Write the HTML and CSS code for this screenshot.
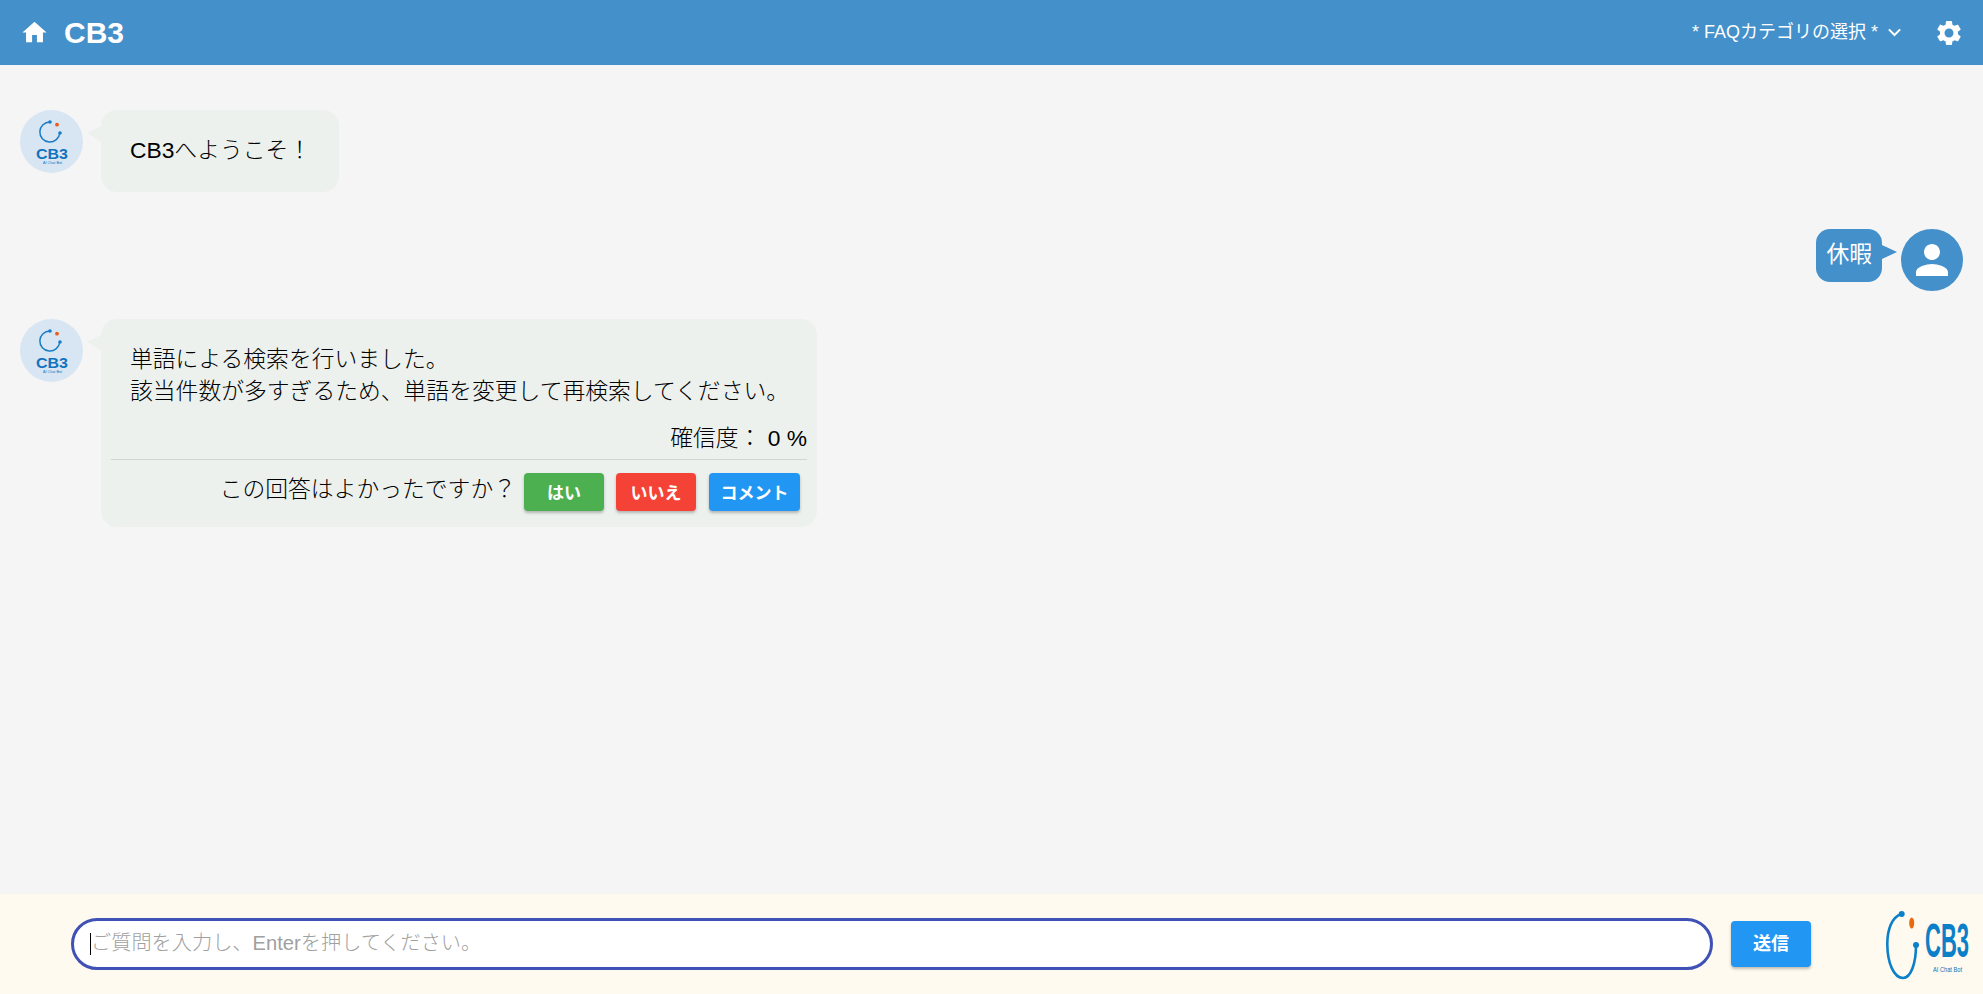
FILE: index.html
```html
<!DOCTYPE html>
<html lang="ja">
<head>
<meta charset="utf-8">
<title>CB3</title>
<link rel="stylesheet" href="styles.css">
</head>
<body>
<div class="app">
  <header class="topbar">
    <svg class="icon-home" viewBox="0 0 24 24"><path d="M10 20v-6h4v6h5v-8h3L12 3 2 12h3v8z"/></svg>
    <h1 class="brand">CB3</h1>
    <div class="spacer"></div>
    <div class="faq-select">
      <span class="faq-label">* FAQカテゴリの選択 *</span>
      <svg class="chevron" viewBox="0 0 12 8"><path d="M1 1.2l5 5 5-5"/></svg>
    </div>
    <svg class="icon-gear" viewBox="0 0 24 24"><path d="M19.14 12.94c.04-.3.06-.61.06-.94 0-.32-.02-.64-.07-.94l2.03-1.58c.18-.14.23-.41.12-.61l-1.92-3.32c-.12-.22-.37-.29-.59-.22l-2.39.96c-.5-.38-1.03-.7-1.62-.94l-.36-2.54c-.04-.24-.24-.41-.48-.41h-3.84c-.24 0-.43.17-.47.41l-.36 2.54c-.59.24-1.13.57-1.62.94l-2.39-.96c-.22-.08-.47 0-.59.22L2.74 8.87c-.12.21-.08.47.12.61l2.03 1.58c-.05.3-.09.63-.09.94s.02.64.07.94l-2.03 1.58c-.18.14-.23.41-.12.61l1.92 3.32c.12.22.37.29.59.22l2.39-.96c.5.38 1.03.7 1.62.94l.36 2.54c.05.24.24.41.48.41h3.84c.24 0 .44-.17.47-.41l.36-2.54c.59-.24 1.13-.56 1.62-.94l2.39.96c.22.08.47 0 .59-.22l1.92-3.32c.12-.22.07-.47-.12-.61l-2.01-1.58zM12 15.6c-1.98 0-3.6-1.62-3.6-3.6s1.62-3.6 3.6-3.6 3.6 1.62 3.6 3.6-1.62 3.6-3.6 3.6z"/></svg>
  </header>

  <main class="chat">
    <div class="row">
      <div class="avatar bot">
        <svg viewBox="0 0 63 63">
          <path class="mark" d="M30 12A10 10 0 1 0 39.800 23"/>
          <circle class="mark-dot" cx="30" cy="12" r="1.800"/>
          <circle class="mark-dot" cx="40" cy="23" r="1.800"/>
          <circle class="mark-orange" cx="37" cy="14.700" r="1.900"/>
          <text class="mark-name" x="16" y="49" textLength="32" lengthAdjust="spacingAndGlyphs">CB3</text>
          <text class="mark-sub" x="23" y="53.500" textLength="19" lengthAdjust="spacingAndGlyphs">AI Chat Bot</text>
        </svg>
      </div>
      <div class="bubble bot-bubble welcome">CB3へようこそ！</div>
    </div>

    <div class="row user-row">
      <div class="bubble user-bubble">休暇</div>
      <div class="avatar user">
        <svg viewBox="0 0 24 24"><path d="M12 12c2.21 0 4-1.79 4-4s-1.79-4-4-4-4 1.79-4 4 1.79 4 4 4zm0 2c-2.67 0-8 1.34-8 4v2h16v-2c0-2.66-5.33-4-8-4z"/></svg>
      </div>
    </div>

    <div class="row">
      <div class="avatar bot">
        <svg viewBox="0 0 63 63">
          <path class="mark" d="M30 12A10 10 0 1 0 39.800 23"/>
          <circle class="mark-dot" cx="30" cy="12" r="1.800"/>
          <circle class="mark-dot" cx="40" cy="23" r="1.800"/>
          <circle class="mark-orange" cx="37" cy="14.700" r="1.900"/>
          <text class="mark-name" x="16" y="49" textLength="32" lengthAdjust="spacingAndGlyphs">CB3</text>
          <text class="mark-sub" x="23" y="53.500" textLength="19" lengthAdjust="spacingAndGlyphs">AI Chat Bot</text>
        </svg>
      </div>
      <div class="bubble bot-bubble answer">
        <p class="answer-text">単語による検索を行いました。<br>該当件数が多すぎるため、単語を変更して再検索してください。</p>
        <p class="confidence">確信度： 0 %</p>
        <div class="feedback">
          <span class="feedback-label">この回答はよかったですか？</span>
          <button class="btn green">はい</button>
          <button class="btn red">いいえ</button>
          <button class="btn blue wide">コメント</button>
        </div>
      </div>
    </div>
  </main>

  <footer class="composer">
    <div class="field">
      <span class="caret"></span>
      <input class="field-input" type="text" placeholder="ご質問を入力し、Enterを押してください。">
    </div>
    <button class="btn blue send">送信</button>
    <svg class="logo" viewBox="0 0 84 74">
      <path class="logo-arc" d="M15.700 7C5.500 10 1.300 23 1.300 37C1.300 56 8 71 17 71C25 71 30 56 30 38"/>
      <circle class="logo-dot" cx="15.700" cy="7" r="3"/>
      <circle class="logo-dot" cx="30" cy="38" r="3"/>
      <ellipse class="logo-orange" cx="25.700" cy="16" rx="2.500" ry="5.500"/>
      <text class="logo-name" transform="translate(39 50) scale(1 2.150)">CB3</text>
      <text class="logo-sub" x="47" y="65" textLength="29" lengthAdjust="spacingAndGlyphs">AI Chat Bot</text>
    </svg>
  </footer>
</div>
</body>
</html>
```
FILE: styles.css
```css
* { box-sizing: border-box; }
html, body { margin: 0; height: 100%; overflow: hidden; }
body {
  font-family: "Liberation Sans", "Noto Sans CJK JP", sans-serif;
  color: #000;
  background: #f5f5f5;
}
.app { display: flex; flex-direction: column; height: 994px; }

.topbar {
  display: flex;
  align-items: center;
  height: 65px;
  flex: none;
  padding: 0 19px 0 20px;
  background: #4490ca;
  color: #fff;
}
.icon-home { width: 29px; height: 29px; fill: #fff; }
.brand { margin: 0 0 0 15px; font-size: 30px; font-weight: 700; line-height: 1; }
.spacer { flex: 1; }
.faq-select { display: flex; align-items: center; font-size: 18px; }
.faq-label { margin-top: -6px; }
.chevron { width: 15px; height: 9px; margin-left: 9px; margin-top: 0; fill: none; stroke: #fff; stroke-width: 1.800; }
.icon-gear { width: 30px; height: 30px; margin-left: 32px; margin-top: 1px; fill: #fff; }

.chat { flex: 1; padding: 45px 20px 0; }
.row { display: flex; align-items: flex-start; margin-bottom: 28px; }
.user-row { justify-content: flex-end; height: 62px; }
.avatar { width: 63px; height: 63px; border-radius: 50%; flex: none; overflow: hidden; }
.avatar svg { display: block; width: 100%; height: 100%; }
.avatar.bot { background: #d8e6f3; }
.avatar.user { width: 62px; height: 62px; background: #4490ca; padding: 7px; }
.avatar.user svg { fill: #fff; }

.mark { fill: none; stroke: #1a7cc4; stroke-width: 1.500; }
.mark-dot { fill: #1a7cc4; }
.mark-orange { fill: #ef5a1c; }
.mark-name { font-family: "Liberation Sans", sans-serif; font-weight: 700; font-size: 14px; fill: #1273bd; }
.mark-sub { font-family: "Liberation Sans", sans-serif; font-size: 3.500px; fill: #1273bd; }

.bubble { position: relative; font-size: 22.8px; font-weight: 300; }
.bot-bubble { margin-left: 18px; margin-bottom: 9px; background: #edf1ee; border-radius: 16px; }
.bot-bubble::before {
  content: "";
  position: absolute;
  left: -14px;
  top: 16px;
  border-style: solid;
  border-width: 7px 14px 9px 0;
  border-color: transparent #edf1ee transparent transparent;
}
.welcome { width: 238px; height: 82px; padding: 24px 0 0 29px; line-height: 32px; }
.user-bubble {
  margin-right: 19px;
  padding: 9px 10px 0;
  height: 53px;
  line-height: 32px;
  font-weight: 400;
  background: #4490ca;
  border-radius: 14px;
  color: #fff;
}
.user-bubble::after {
  content: "";
  position: absolute;
  right: -15px;
  top: 16px;
  border-style: solid;
  border-width: 7px 0 7px 15px;
  border-color: transparent transparent transparent #4490ca;
}
.answer { width: 716px; height: 208px; padding: 24px 10px 0; }
.answer-text { margin: 0 0 0 19px; line-height: 32px; white-space: nowrap; }
.confidence { margin: 15px 0 0; padding-bottom: 5px; line-height: 32px; text-align: right; border-bottom: 1px solid #d2d6d3; }
.feedback { display: flex; align-items: center; justify-content: flex-end; margin-top: 13px; padding-right: 7px; }
.feedback-label { margin-right: 8px; margin-top: -10px; }

.btn {
  display: block;
  width: 80px;
  height: 38px;
  margin-left: 12px;
  padding: 0 0 2px;
  border: 0;
  border-radius: 4px;
  font-family: Roboto, "Noto Sans CJK JP", sans-serif;
  font-size: 17px;
  font-weight: 700;
  color: #fff;
  box-shadow: 0 2px 3px rgba(0,0,0,.25);
}
.feedback-label + .btn { margin-left: 0; }
.green { background: #4caf50; }
.red { background: #f44336; }
.blue { background: #2196f3; }
.wide { width: 91px; margin-left: 13px; }

.composer {
  display: flex;
  align-items: center;
  flex: none;
  height: 100px;
  padding: 0 13px 0 71px;
  background: #fffaf0;
}
.field {
  position: relative;
  flex: 1;
  height: 52px;
  border: 3px solid #3f51b5;
  border-radius: 26px;
  background: #fff;
}
.caret { position: absolute; left: 16px; top: 12px; width: 1px; height: 22px; background: #000; }
.field-input {
  display: block;
  width: 100%;
  height: 100%;
  padding: 0 17px 2px;
  border: 0;
  outline: 0;
  background: transparent;
  font-family: "Liberation Sans", "Noto Sans CJK JP", sans-serif;
  font-size: 20.2px;
  font-weight: 300;
}
.field-input::placeholder { color: #a0a0a0; opacity: 1; }
.send { height: 46px; margin-left: 18px; padding-bottom: 4px; font-size: 18px; }
.logo { width: 84px; height: 74px; margin-left: 75px; flex: none; overflow: visible; }
.logo-arc { fill: none; stroke: #0b80c8; stroke-width: 2.600; }
.logo-dot { fill: #0b80c8; }
.logo-orange { fill: #e96a0c; }
.logo-name { font-family: "Liberation Sans", sans-serif; font-weight: 700; font-size: 22px; fill: #0b80c8; }
.logo-sub { font-family: "Liberation Sans", sans-serif; font-size: 8px; fill: #0b6fb5; }
```
